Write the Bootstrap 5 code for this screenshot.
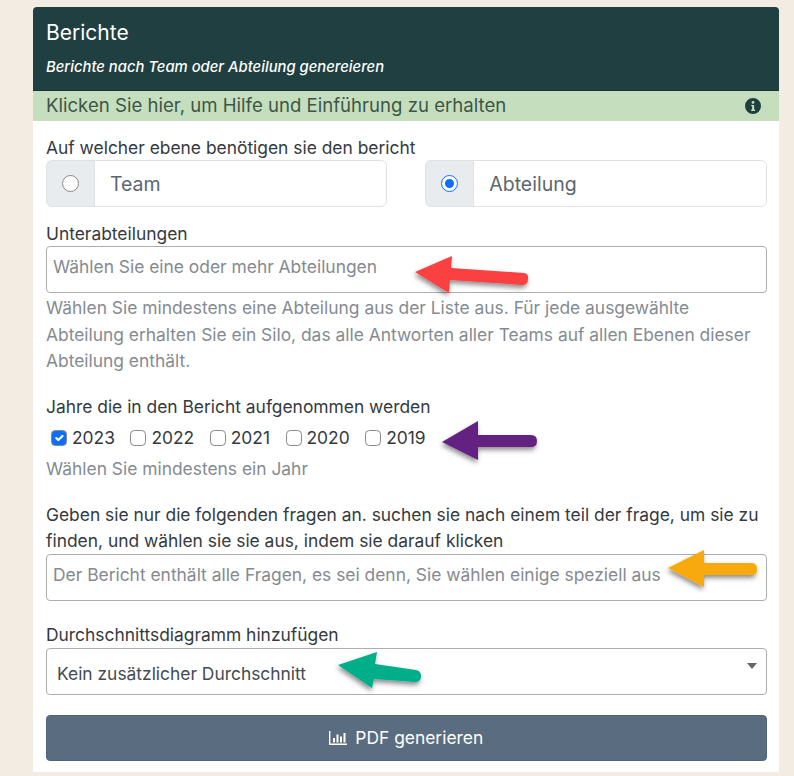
<!DOCTYPE html>
<html lang="de">
<head>
    <meta charset="UTF-8">
    <meta name="viewport" content="width=device-width, initial-scale=1.0">
    <title>Berichte</title>
    <link href="https://cdn.jsdelivr.net/npm/bootstrap@5.3.0/dist/css/bootstrap.min.css" rel="stylesheet">
    <style>
        html, body { height: 776px; overflow: hidden; }
        body { background: #f3ece2; font-family: Inter, "Liberation Sans", sans-serif; font-size: 17.4px; color: #343a40; position: relative; }
        .report-card { width: 746px; height: 765px; margin: 7px 0 0 33px; border: 0; border-radius: 4px 4px 0 0; overflow: hidden; }
        .report-head { height: 84px; background: #1f3f41; color: #fff; padding: 14px 13px 0; border-bottom: 1px solid #183335; }
        .report-title { font-size: 21px; line-height: 24px; margin-bottom: 12px; }
        .report-sub { font-size: 14.8px; line-height: 20px; font-style: italic; font-weight: 500; }
        .help-bar { height: 30px; background: #c5dfbe; color: #3f5549; font-size: 18.6px; padding: 0 18px 0 13px; }
        .report-body { padding: 14px 12.5px 0 13px; }
        .field-label { display: block; line-height: 26px; margin: 0; }
        .level-row { gap: 38px; margin-top: -1px; margin-bottom: 14px; }
        .level-row .input-group { flex: 1 1 0; height: 47px; }
        .level-row .input-group-text { width: 49px; justify-content: center; padding: 0; background: #e9ecef; border-color: #dee2e6; }
        .level-row .form-check-input { width: 17px; height: 17px; margin: 0; border-color: #888; }
        .level-row .form-check-input:checked { border-color: #0d6efd; background-color: #fff; background-size: 100% 100%; background-image: url("data:image/svg+xml,%3Csvg xmlns='http://www.w3.org/2000/svg' viewBox='-4 -4 8 8'%3E%3Ccircle r='2.4' fill='%230d6efd'/%3E%3C/svg%3E"); }
        .level-row .form-control { font-size: 19.5px; color: #5c6670; padding: 8px 15px 6px; border-color: #dee2e6; }
        .pick-box { height: 47px; border: 1px solid #adadad; border-radius: 4px; padding: 0 6px; color: #858a90; line-height: 40px; white-space: nowrap; }
        .pick-box-up { margin-top: -1px; }
        .hint-text { color: #858b92; line-height: 26.5px; }
        .pick-box + .hint-text { margin-top: 2px; }
        .year-check { gap: 15.5px; padding-left: 5px; line-height: 24px; margin-top: 6px; margin-bottom: 6px; }
        .year-check .form-check-input { width: 16px; height: 16px; margin: 0 5px 0 0; border-color: #888; vertical-align: -2px; }
        .avg-select { height: 47px; border: 1px solid #adadad; border-radius: 4px; color: #444b52; font-size: 17.4px; padding: 5px 30px 0 10px; box-shadow: none; background-size: 10px 6px; background-position: right 9px top 14px; background-image: url("data:image/svg+xml,%3Csvg xmlns='http://www.w3.org/2000/svg' viewBox='0 0 10 6'%3E%3Cpath fill='%23666' d='M0 0h10L5 6z'/%3E%3C/svg%3E"); }
        .pdf-btn { height: 46px; margin-top: 20px; background: #5a6c7f; border: 1px solid #52637a; color: #fff; font-size: 17.4px; border-radius: 4px; }
        .pdf-btn:hover { background: #5a6c7f; color: #fff; }
        .gap-top { margin-top: 20px; }
        .gap-top-sm { margin-top: 19px; }
        .gap-top-lg { margin-top: 21px; }
        .arrow-layer { position: absolute; left: 0; top: 0; pointer-events: none; }
    </style>
</head>
<body>
    <div class="card report-card">
        <div class="report-head">
            <div class="report-title">Berichte</div>
            <div class="report-sub">Berichte nach Team oder Abteilung genereieren</div>
        </div>
        <div class="help-bar d-flex align-items-center justify-content-between">
            <span>Klicken Sie hier, um Hilfe und Einführung zu erhalten</span>
            <svg width="16" height="16" viewBox="0 0 16 16" aria-hidden="true"><path fill="#1f3f41" fill-rule="evenodd" d="M8 0a8 8 0 1 0 0 16A8 8 0 0 0 8 0zM8 3a1.4 1.4 0 1 1 0 2.8A1.4 1.4 0 0 1 8 3zM6.2 6.9h2.9v4.6h.9v1.4H6.2v-1.4h.9V8.3h-.9z"/></svg>
        </div>
        <div class="report-body">
            <label class="field-label">Auf welcher ebene benötigen sie den bericht</label>
            <div class="d-flex level-row">
                <div class="input-group">
                    <span class="input-group-text"><input class="form-check-input" type="radio" name="level"></span>
                    <input class="form-control" type="text" value="Team" readonly>
                </div>
                <div class="input-group">
                    <span class="input-group-text"><input class="form-check-input" type="radio" name="level" checked></span>
                    <input class="form-control" type="text" value="Abteilung" readonly>
                </div>
            </div>

            <label class="field-label">Unterabteilungen</label>
            <div class="pick-box pick-box-up">Wählen Sie eine oder mehr Abteilungen</div>
            <div class="hint-text">Wählen Sie mindestens eine Abteilung aus der Liste aus. Für jede ausgewählte Abteilung erhalten Sie ein Silo, das alle Antworten aller Teams auf allen Ebenen dieser Abteilung enthält.</div>

            <label class="field-label gap-top-sm">Jahre die in den Bericht aufgenommen werden</label>
            <div class="d-flex year-check">
                <label><input class="form-check-input" type="checkbox" checked>2023</label>
                <label><input class="form-check-input" type="checkbox">2022</label>
                <label><input class="form-check-input" type="checkbox">2021</label>
                <label><input class="form-check-input" type="checkbox">2020</label>
                <label><input class="form-check-input" type="checkbox">2019</label>
            </div>
            <div class="hint-text">Wählen Sie mindestens ein Jahr</div>

            <label class="field-label gap-top">Geben sie nur die folgenden fragen an. suchen sie nach einem teil der frage, um sie zu finden, und wählen sie sie aus, indem sie darauf klicken</label>
            <div class="pick-box">Der Bericht enthält alle Fragen, es sei denn, Sie wählen einige speziell aus</div>

            <label class="field-label gap-top-lg">Durchschnittsdiagramm hinzufügen</label>
            <select class="form-select avg-select">
                <option>Kein zusätzlicher Durchschnitt</option>
            </select>

            <button class="btn pdf-btn w-100 d-flex align-items-center justify-content-center gap-2" type="button">
                <svg width="18" height="14" viewBox="0 0 18 14" aria-hidden="true"><path fill="#fff" d="M0 0h1.4v12.6H18V14H0zM4 7h2v4.5H4zM7.5 3.5h2v8h-2zM11 5.5h2v6h-2zM14.5 2h2v9.5h-2z"/></svg>
                PDF generieren
            </button>
        </div>
    </div>

    <svg class="arrow-layer" width="794" height="776" viewBox="0 0 794 776" aria-hidden="true">
        <defs>
            <filter id="arrowShade" x="-20%" y="-30%" width="140%" height="170%">
                <feDropShadow dx="-1" dy="3" stdDeviation="2.5" flood-color="#000" flood-opacity="0.45"/>
            </filter>
        </defs>
        <g filter="url(#arrowShade)" stroke-linejoin="round">
            <path fill="#fb3f42" d="M415 272L452 256L451 268L524 273Q529 274 528 279Q528 285 522 285L450 280L449 293z"/>
            <path fill="#632281" d="M442 442L478 421V435H531Q537 435 537 441Q537 447 531 447H478V460z"/>
            <path fill="#f8a908" d="M668 568L704 550V563H752Q757 563 757 569Q757 575 752 575H704V587z"/>
            <path fill="#03ae8a" d="M338 665L377 652L375 664L416 670Q421 671 421 676Q421 682 415 682L374 679L372 688z"/>
        </g>
    </svg>
</body>
</html>
